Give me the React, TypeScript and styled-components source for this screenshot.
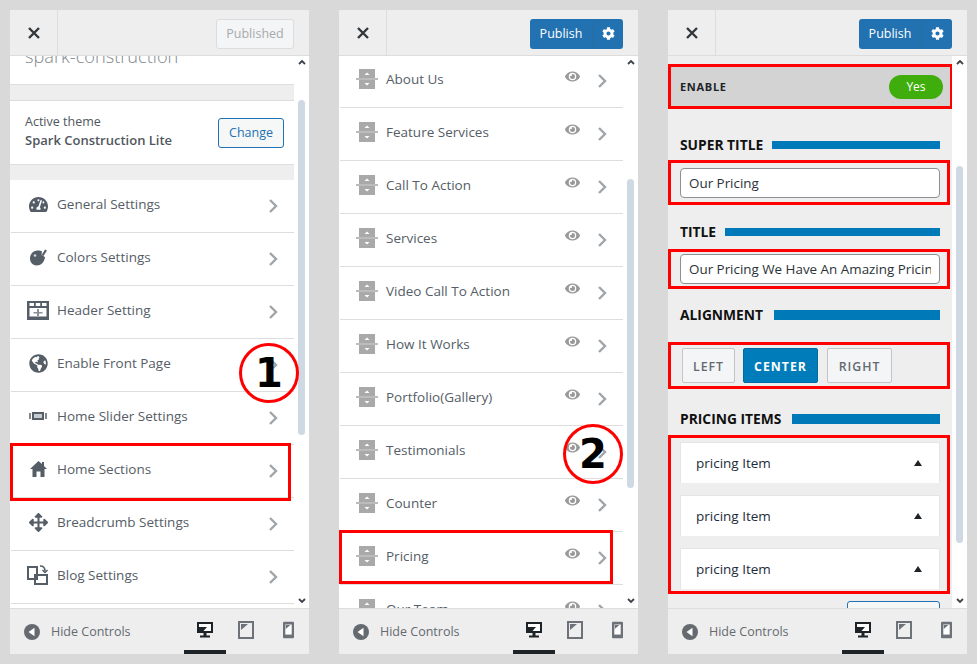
import React from "react";
import styled, { createGlobalStyle } from "styled-components";
import { FaArrowsAlt, FaCog, FaEye, FaGlobeAmericas, FaTachometerAlt } from "react-icons/fa";

const GlobalStyle = createGlobalStyle`
    html, body {
        margin: 0;
        padding: 0;
        background: #d9d9d9;
    }
    * {
        box-sizing: border-box;
    }
`;

const PaletteIcon = () => (
    <svg width="18" height="17" viewBox="0 0 18 17">
        <path d="M9 1.500C4.500 1.500 1 4.800 1 9.500 1 13.500 4 16.500 7.500 16.500c4.500 0 8-3.500 8.500-8.500L12.500 6 13 2.500C12 1.800 10.500 1.500 9 1.500z" fill="#555d66" />
        <path d="M13.500 6.500L17 1" stroke="#555d66" strokeWidth="2.200" />
        <circle cx="6" cy="6.500" r="1.300" fill="#d3d6d9" />
    </svg>
);

const HomeIcon = () => (
    <svg width="17" height="16" viewBox="0 0 17 16" fill="#555d66">
        <path d="M8.500 0l3.500 3V1h2v4l3 3h-2.500v8H10.500v-5.500h-4V16H2.500V8H0z" />
    </svg>
);

const SliderIcon = () => (
    <svg width="20" height="20" viewBox="0 0 20 20" fill="#555d66">
        <path d="M1 7h2v6H1zM17 7h2v6h-2z" opacity=".75" />
        <path d="M4 6h12v8H4z" />
        <path d="M6 8h8v4H6z" fill="#c8cbce" />
    </svg>
);

const HeaderIcon = () => (
    <svg width="22" height="19" viewBox="0 0 22 19">
        <path d="M0 0h22v19H0z" fill="#555d66" />
        <path d="M2.500 2h4.500v3H2.500zM8.750 2h4.500v3h-4.500zM15 2h4.500v3H15zM2.500 7h17v8.500h-17z" fill="#fff" />
        <path d="M10 8v3H6.500v1.500H10V15h2v-2.500h3.500V11H12V8z" fill="#8a9096" />
    </svg>
);

const BlogIcon = () => (
    <svg width="22" height="22" viewBox="0 0 22 22" fill="none" stroke="#555d66" strokeWidth="2">
        <path d="M1 3h9v12H1zM8 11h12v9H8z" />
        <path d="M13 2c3 0 5 1 5 5" strokeWidth="1.500" />
        <path d="M15.500 6l2.500 2.500L20.500 6" strokeWidth="1.500" />
    </svg>
);

const SectionIcon = () => (
    <svg width="22" height="20" viewBox="0 0 22 20">
        <path d="M3 0h16v20H3z" fill="#a9a9a9" />
        <path d="M0 9h22v2H0z" fill="#bcbcbc" />
        <path d="M11 3.500l2.500 2.500h-5zM11 16.500L8.500 14h5z" fill="#fff" />
    </svg>
);

const CloseIcon = () => (
    <svg width="12" height="12" viewBox="0 0 12 12" stroke="#32373c" strokeWidth="2.400">
        <path d="M1 1l10 10M11 1L1 11" />
    </svg>
);

const Chevron = () => (
    <svg width="10" height="14" viewBox="0 0 10 14" fill="none" stroke="#a0a5aa" strokeWidth="2.400">
        <path d="M2 1l6 6-6 6" />
    </svg>
);

const CollapseIcon = () => (
    <svg width="16" height="16" viewBox="0 0 16 16">
        <circle cx="8" cy="8" r="8" fill="#656a70" />
        <path d="M10.500 3.800v8.400L4.500 8z" fill="#fff" />
    </svg>
);

const DesktopIcon = () => (
    <svg width="18" height="18" viewBox="0 0 18 18">
        <path d="M1 1h16v11H1z" fill="#1d2327" />
        <path d="M3 3h12v7H7.500L11 6H3z" fill="#fff" />
        <path d="M7.500 12h3v2.500H14V16.500H4V14.500h3.500z" fill="#1d2327" />
    </svg>
);

const TabletIcon = () => (
    <svg width="16" height="18" viewBox="0 0 16 18">
        <path d="M1 1h14v16H1z" fill="none" stroke="#6c7278" strokeWidth="2" />
        <path d="M3 3h7L3 9z" fill="#6c7278" />
    </svg>
);

const PhoneIcon = () => (
    <svg width="11" height="18" viewBox="0 0 12 18">
        <path d="M1 0h10a1 1 0 0 1 1 1v16a1 1 0 0 1-1 1H1a1 1 0 0 1-1-1V1a1 1 0 0 1 1-1z" fill="#6c7278" />
        <path d="M2.500 3h7v11h-7z" fill="#fff" />
        <path d="M3 3.500h5L3 8z" fill="#6c7278" />
    </svg>
);

const settings = [
    { label: "General Settings", icon: <FaTachometerAlt size={19} /> },
    { label: "Colors Settings", icon: <PaletteIcon /> },
    { label: "Header Setting", icon: <HeaderIcon /> },
    { label: "Enable Front Page", icon: <FaGlobeAmericas size={19} /> },
    { label: "Home Slider Settings", icon: <SliderIcon /> },
    { label: "Home Sections", icon: <HomeIcon />, marked: true },
    { label: "Breadcrumb Settings", icon: <FaArrowsAlt size={19} /> },
    { label: "Blog Settings", icon: <BlogIcon /> },
];

const sections = ["About Us", "Feature Services", "Call To Action", "Services", "Video Call To Action", "How It Works", "Portfolio(Gallery)", "Testimonials", "Counter", "Pricing", "Our Team"];

const Scrollbar = ({ gap, tail }: { gap: number; tail: number }) => (
    <Track>
        <svg width="8" height="6" viewBox="0 0 8 6" fill="none" stroke="#3c434a" strokeWidth="1.800"><path d="M1 5l3-3 3 3" /></svg>
        <Thumb $gap={gap} $tail={tail} />
        <DownArrow width="8" height="6" viewBox="0 0 8 6" fill="none" stroke="#3c434a" strokeWidth="1.800"><path d="M1 1l3 3 3-3" /></DownArrow>
    </Track>
);

const Footer = () => (
    <FooterBar>
        <CollapseIcon />
        <HideLabel>Hide Controls</HideLabel>
        <Devices>
            <Device $active><DesktopIcon /></Device>
            <Device><TabletIcon /></Device>
            <Device><PhoneIcon /></Device>
        </Devices>
    </FooterBar>
);

const PublishGroup = () => (
    <PublishButton>
        <PublishLabel>Publish</PublishLabel>
        <PublishGear><FaCog size={13} /></PublishGear>
    </PublishButton>
);

const SectionTitle = ({ title, gap, thick, barGap = 9 }: { title: string; gap: number; thick?: boolean; barGap?: number }) => (
    <TitleRow $gap={gap} $barGap={barGap}>
        <TitleText>{title}</TitleText>
        <TitleBar $thick={thick} />
    </TitleRow>
);

export default function App() {
    return (
        <Page>
            <GlobalStyle />
            <Panel>
                <Header>
                    <CloseCell><CloseIcon /></CloseCell>
                    <PublishedButton>Published</PublishedButton>
                </Header>
                <Body>
                    <Content>
                        <SiteStub><SiteName>spark-construction</SiteName></SiteStub>
                        <GreyGap />
                        <ThemeBlock>
                            <ThemeText>
                                <ThemeLabel>Active theme</ThemeLabel>
                                <ThemeName>Spark Construction Lite</ThemeName>
                            </ThemeText>
                            <OutlineButton>Change</OutlineButton>
                        </ThemeBlock>
                        <GreyGap />
                        {settings.map(item => (
                            <Row key={item.label} $marked={item.marked} $markRight={3} $markBottom={-4} $markTop={-2}>
                                <RowIcon>{item.icon}</RowIcon>
                                <RowLabel>{item.label}</RowLabel>
                                <RowChevron><Chevron /></RowChevron>
                            </Row>
                        ))}
                    </Content>
                    <Scrollbar gap={35} tail={163} />
                </Body>
                <Footer />
                <Badge $left={229} $top={333}>1</Badge>
            </Panel>

            <Panel>
                <Header>
                    <CloseCell><CloseIcon /></CloseCell>
                    <PublishGroup />
                </Header>
                <Body>
                    <SectionList>
                        {sections.map(name => (
                            <Row key={name} $marked={name === "Pricing"} $markRight={10} $markBottom={0} $markTop={-2}>
                                <RowIcon><SectionIcon /></RowIcon>
                                <RowLabel>{name}</RowLabel>
                                <EyeIcon><FaEye size={15} /></EyeIcon>
                                <RowChevron><Chevron /></RowChevron>
                            </Row>
                        ))}
                    </SectionList>
                    <Scrollbar gap={114} tail={110} />
                </Body>
                <Footer />
                <Badge $left={224} $top={414}>2</Badge>
            </Panel>

            <Panel>
                <Header>
                    <CloseCell><CloseIcon /></CloseCell>
                    <PublishGroup />
                </Header>
                <Body>
                    <Options>
                        <EnableBox>
                            <EnableLabel>ENABLE</EnableLabel>
                            <Toggle>Yes</Toggle>
                        </EnableBox>
                        <SectionTitle title="SUPER TITLE" gap={26} />
                        <FieldBox $top={5} $height={45} $pad="5px 7px 4px 9px">
                            <TextField readOnly value="Our Pricing" />
                        </FieldBox>
                        <SectionTitle title="TITLE" gap={17} />
                        <FieldBox $top={7} $height={40} $pad="2px 7px 2px 9px">
                            <TextField readOnly value="Our Pricing We Have An Amazing Pricing" />
                        </FieldBox>
                        <SectionTitle title="ALIGNMENT" gap={16} thick barGap={11} />
                        <FieldBox $top={17} $height={47} $pad="3px 7px 3px 11px">
                            <AlignButton $width={53}>Left</AlignButton>
                            <AlignButton $width={75} $active>Center</AlignButton>
                            <AlignButton $width={65}>Right</AlignButton>
                        </FieldBox>
                        <SectionTitle title="PRICING ITEMS" gap={20} thick barGap={11} />
                        <ItemsBox>
                            {[1, 2, 3].map(n => (
                                <PricingItem key={n}>
                                    pricing Item
                                    <Caret />
                                </PricingItem>
                            ))}
                        </ItemsBox>
                        <AddButton />
                    </Options>
                    <Scrollbar gap={101} tail={55} />
                </Body>
                <Footer />
            </Panel>
        </Page>
    );
}

const Page = styled.div`
    display: flex;
    gap: 30px;
    width: 977px;
    height: 664px;
    padding: 10px;
    background: #d9d9d9;
    font-family: "Open Sans", "Noto Sans", sans-serif;
    font-size: 13px;
    overflow: hidden;
`;

const Panel = styled.section`
    position: relative;
    display: flex;
    flex-direction: column;
    width: 299px;
    height: 644px;
    background: #fff;
`;

const Header = styled.header`
    display: flex;
    align-items: center;
    justify-content: space-between;
    height: 46px;
    padding-right: 15px;
    background: #eee;
    border-bottom: 1px solid #ddd;
`;

const CloseCell = styled.div`
    display: flex;
    align-items: center;
    justify-content: center;
    width: 48px;
    height: 45px;
    border-right: 1px solid #ddd;
`;

const PublishedButton = styled.div`
    display: flex;
    align-items: center;
    justify-content: center;
    width: 78px;
    height: 30px;
    margin-top: 2px;
    background: #f3f5f6;
    border: 1px solid #dcdcde;
    border-radius: 3px;
    font-size: 12.500px;
    color: #a7aaad;
`;

const PublishButton = styled.div`
    display: flex;
    width: 93px;
    height: 30px;
    margin-top: 2px;
    background: #2271b1;
    border-radius: 3px;
    font-size: 12.500px;
    color: #fff;
`;

const PublishLabel = styled.span`
    display: flex;
    align-items: center;
    justify-content: center;
    width: 63px;
    border-right: 1px solid #2a6da3;
`;

const PublishGear = styled.span`
    display: flex;
    flex: 1;
    align-items: center;
    justify-content: center;
`;

const Body = styled.div`
    display: flex;
    flex: 1;
    min-height: 0;
    overflow: hidden;
`;

const Content = styled.div`
    flex: 1;
    min-width: 0;
`;

const SectionList = styled(Content)`
    margin-top: -1px;
`;

const Track = styled.div`
    display: flex;
    flex-direction: column;
    align-items: center;
    flex: 0 0 15px;
    padding: 3px 0 4px;
    background: #fff;
`;

const Thumb = styled.div<{ $gap: number; $tail: number }>`
    flex: 1;
    width: 7px;
    margin-top: ${p => p.$gap}px;
    margin-bottom: ${p => p.$tail}px;
    background: #cfd9e3;
    border-radius: 4px;
`;

const DownArrow = styled.svg`
    flex: none;
`;

const SiteStub = styled.div`
    height: 29px;
    padding-left: 15px;
    border-bottom: 1px solid #ddd;
    overflow: hidden;
`;

const SiteName = styled.div`
    margin-top: -13px;
    font-size: 18.200px;
    font-weight: 300;
    line-height: 27px;
    color: #82878c;
`;

const GreyGap = styled.div`
    height: 15px;
    background: #eee;
`;

const ThemeBlock = styled.div`
    display: flex;
    align-items: center;
    justify-content: space-between;
    height: 65px;
    padding: 0 10px 0 15px;
    border-top: 1px solid #ddd;
    border-bottom: 1px solid #ddd;
    color: #50575e;
`;

const ThemeText = styled.div`
    margin-top: -4px;
`;

const ThemeLabel = styled.div`
    font-size: 12.500px;
    line-height: 18px;
`;

const ThemeName = styled.div`
    font-weight: 600;
    line-height: 18px;
`;

const OutlineButton = styled.div`
    display: flex;
    align-items: center;
    justify-content: center;
    width: 66px;
    height: 30px;
    background: #f6f7f7;
    border: 1px solid #2271b1;
    border-radius: 3px;
    font-size: 12.500px;
    color: #2271b1;
`;

const Row = styled.div<{ $marked?: boolean; $markRight: number; $markBottom: number; $markTop: number }>`
    position: relative;
    display: flex;
    align-items: center;
    height: 53px;
    margin-left: 1px;
    padding: 0 16px;
    border-bottom: 1px solid #ddd;

    ${p => p.$marked && `
        &::after {
            content: '';
            position: absolute;
            top: ${p.$markTop}px;
            bottom: ${p.$markBottom}px;
            left: -1px;
            right: ${p.$markRight}px;
            border: 3px solid #f00;
        }
    `}
`;

const RowIcon = styled.span`
    display: flex;
    align-items: center;
    justify-content: center;
    flex: 0 0 22px;
    height: 22px;
    margin-bottom: 4px;
    color: #555d66;
`;

const RowLabel = styled.span`
    flex: 1;
    margin: 0 0 5px 8px;
    font-size: 13.500px;
    font-weight: 500;
    line-height: 18px;
    color: #555d66;
`;

const RowChevron = styled.span`
    display: flex;
    flex: none;
`;

const EyeIcon = styled.span`
    display: flex;
    margin: 0 17px 10px 0;
    color: #999;
`;

const Badge = styled.div<{ $left: number; $top: number }>`
    position: absolute;
    left: ${p => p.$left}px;
    top: ${p => p.$top}px;
    display: flex;
    align-items: center;
    justify-content: center;
    width: 60px;
    height: 60px;
    border: 3px solid #f00;
    border-radius: 50%;
    font-family: "DejaVu Sans", sans-serif;
    font-size: 40px;
    font-weight: 700;
    color: #000;
`;

const FooterBar = styled.footer`
    display: flex;
    align-items: center;
    height: 46px;
    padding-left: 14px;
    background: #eee;
    border-top: 1px solid #ddd;
`;

const HideLabel = styled.span`
    margin: 0 0 1px 11px;
    font-size: 12.500px;
    color: #656a70;
`;

const Devices = styled.div`
    display: flex;
    align-self: stretch;
    margin-left: auto;
`;

const Device = styled.div<{ $active?: boolean }>`
    display: flex;
    align-items: center;
    justify-content: center;
    width: 42px;
    padding-right: ${p => (p.$active ? 0 : 2)}px;
    border-bottom: 4px solid ${p => (p.$active ? "#1d2327" : "transparent")};
    &:last-child {
        margin-right: -1px;
    }
`;

const Options = styled.div`
    display: flex;
    flex-direction: column;
    flex: 1;
    min-width: 0;
    background: #eee;
`;

const RedBox = styled.div`
    border: 3px solid #f00;
`;

const EnableBox = styled(RedBox)`
    display: flex;
    align-items: center;
    justify-content: space-between;
    width: 285px;
    height: 45px;
    flex: none;
    margin-top: 8px;
    padding: 0 7px 0 9px;
    background: #d3d3d3;
`;

const EnableLabel = styled.span`
    font-size: 11px;
    font-weight: 700;
    letter-spacing: 0.700px;
    color: #1d2327;
`;

const Toggle = styled.span`
    display: flex;
    align-items: center;
    justify-content: center;
    width: 54px;
    height: 24px;
    background: #3fae0d;
    border-radius: 12px;
    font-size: 12px;
    color: #fff;
`;

const TitleRow = styled.div<{ $gap: number; $barGap: number }>`
    display: flex;
    align-items: center;
    flex: none;
    gap: ${p => p.$barGap}px;
    height: 20px;
    margin-top: ${p => p.$gap}px;
    padding: 0 12px;
`;

const TitleText = styled.span`
    margin-bottom: 2px;
    font-size: 13.800px;
    font-weight: 700;
    color: #111;
    white-space: nowrap;
`;

const TitleBar = styled.span<{ $thick?: boolean }>`
    flex: 1;
    height: ${p => (p.$thick ? 10 : 8)}px;
    background: #0079b8;
`;

const FieldBox = styled(RedBox)<{ $top: number; $height: number; $pad: string }>`
    display: flex;
    gap: 8px;
    flex: none;
    width: 282px;
    height: ${p => p.$height}px;
    margin-top: ${p => p.$top}px;
    padding: ${p => p.$pad};
`;

const TextField = styled.input`
    width: 100%;
    height: 30px;
    padding: 0 8px;
    background: #fff;
    border: 1px solid #8c8f94;
    border-radius: 4px;
    outline: none;
    font-family: inherit;
    font-size: 13.400px;
    color: #2c3338;
`;

const AlignButton = styled.div<{ $width: number; $active?: boolean }>`
    display: flex;
    align-items: center;
    justify-content: center;
    width: ${p => p.$width}px;
    height: 35px;
    padding-top: 1px;
    background: ${p => (p.$active ? "#007cba" : "#f3f5f6")};
    border: 1px solid ${p => (p.$active ? "#006ba1" : "#c4c4c4")};
    border-radius: 2px;
    font-size: 12.300px;
    font-weight: ${p => (p.$active ? 700 : 600)};
    letter-spacing: 1px;
    text-transform: uppercase;
    color: ${p => (p.$active ? "#fff" : "#646970")};
    &:last-child {
        margin-left: 1px;
    }
`;

const ItemsBox = styled(RedBox)`
    display: flex;
    flex-direction: column;
    flex: none;
    gap: 12px;
    width: 282px;
    height: 159px;
    margin-top: 6px;
    padding: 4px 7px 0 9px;
`;

const PricingItem = styled.div`
    display: flex;
    align-items: center;
    justify-content: space-between;
    height: 41px;
    padding: 0 17px 0 15px;
    background: #fff;
    border: 1px solid #e5e5e5;
    border-bottom: none;
    font-size: 13.500px;
    font-weight: 500;
    color: #1d2b3a;
`;

const Caret = styled.span`
    width: 0;
    height: 0;
    border-left: 4px solid transparent;
    border-right: 4px solid transparent;
    border-bottom: 6px solid #1d2327;
`;

const AddButton = styled.div`
    flex: none;
    align-self: flex-end;
    width: 93px;
    height: 30px;
    margin: 7px 12px 0 0;
    background: #f6f7f7;
    border: 1px solid #2271b1;
    border-radius: 3px;
`;
